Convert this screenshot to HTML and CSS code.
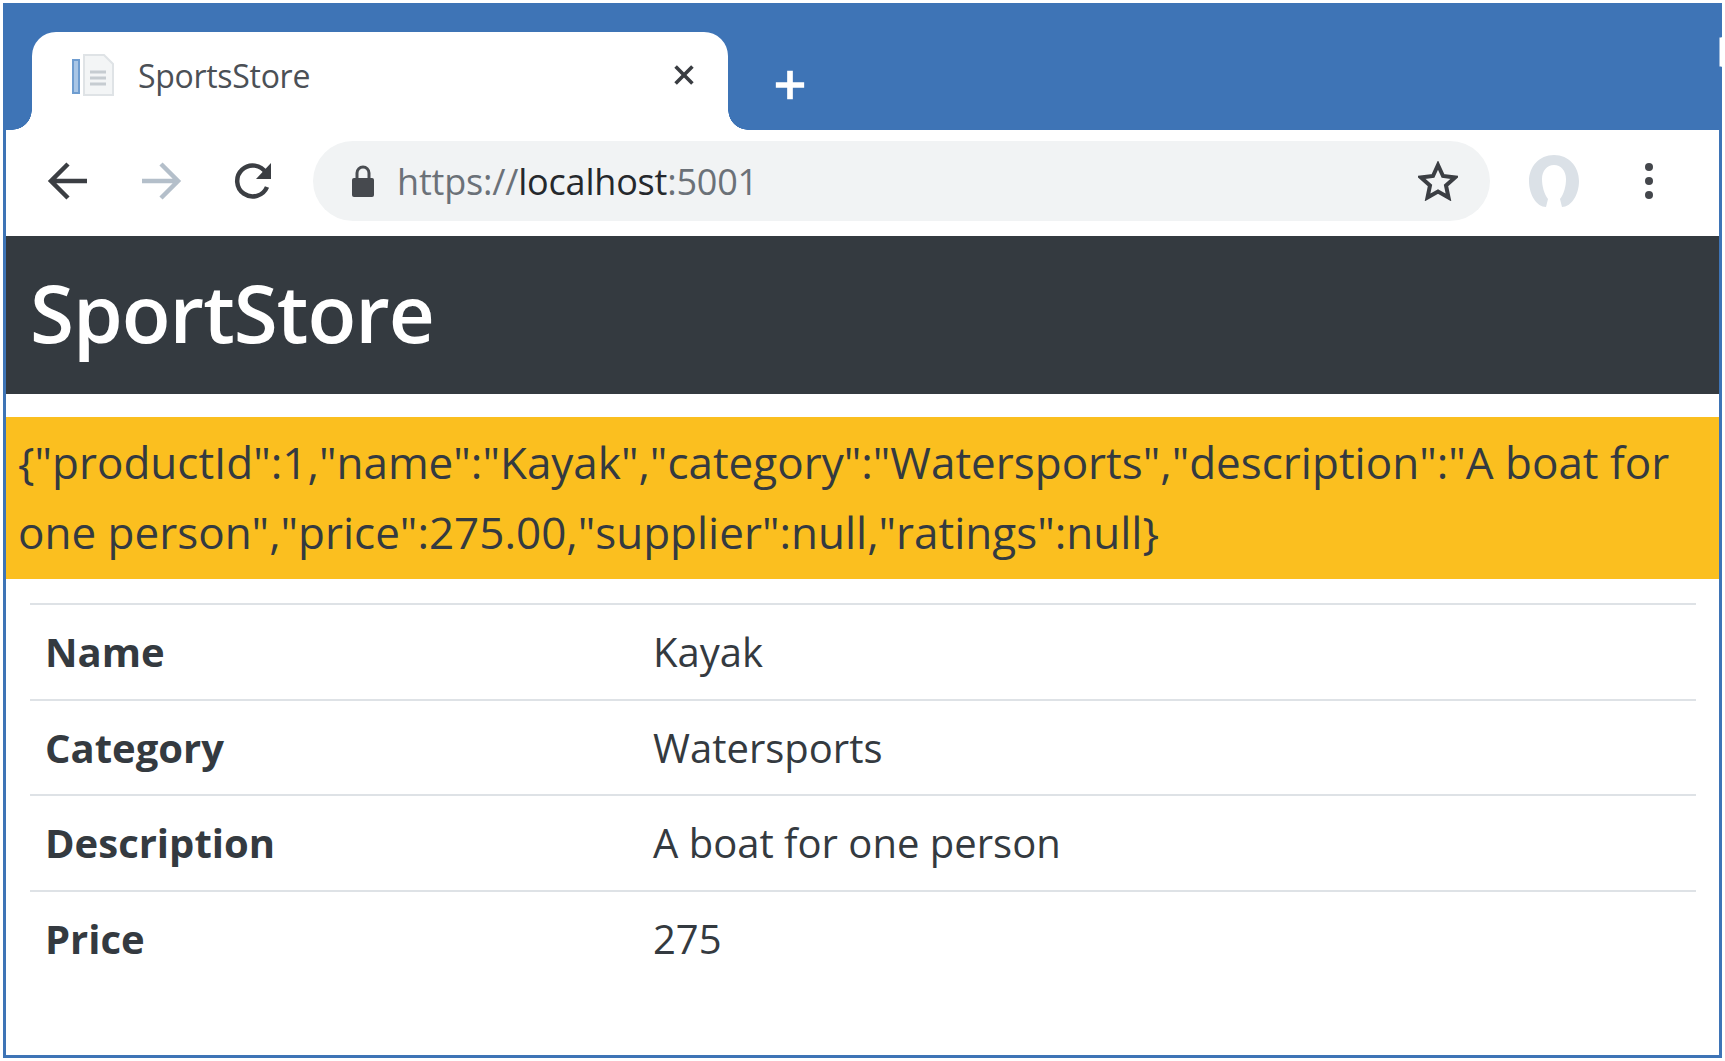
FILE: index.html
```html
<!DOCTYPE html>
<html lang="en">
<head>
<meta charset="utf-8">
<title>SportsStore</title>
<link rel="stylesheet" href="styles.css">
</head>
<body>
<div class="window">
  <div class="titlebar">
    <div class="tab">
      <svg class="favicon" viewBox="0 0 46 46"><path d="M14 3h20l9 9v31H14z" fill="#f3f5f6" stroke="#dfe3e6" stroke-width="2"/><rect x="3" y="8" width="6" height="33" fill="#a9c6e6" stroke="#6f9dd0" stroke-width="2"/><path d="M20 20h16M20 26h16M20 32h16" stroke="#c6ccd1" stroke-width="3"/></svg>
      <span class="tab-title">SportsStore</span>
      <svg class="tab-close" viewBox="0 0 20 20"><path d="M3 3l14 14M17 3L3 17" stroke="#3a3d42" stroke-width="3"/></svg>
    </div>
    <svg class="new-tab" viewBox="0 0 24 24"><path d="M12 2v20M2 12h20" stroke="#fff" stroke-width="4"/></svg>
    <div class="window-controls">
      <svg class="win-btn win-min" viewBox="0 0 30 30"><path d="M1 15h28" stroke="#fff" stroke-width="3"/></svg>
      <svg class="win-btn win-max" viewBox="0 0 30 30"><rect x="2" y="2" width="26" height="26" fill="none" stroke="#fff" stroke-width="3"/></svg>
      <svg class="win-btn win-close" viewBox="0 0 30 30"><path d="M2 1l26 28M28 1L2 29" stroke="#fff" stroke-width="3"/></svg>
    </div>
  </div>
  <div class="toolbar">
    <svg class="nav-icon nav-back" viewBox="0 0 42 42"><path d="M40 21H6M21 4L4 21l17 17" fill="none" stroke="#3b3e43" stroke-width="4.5"/></svg>
    <svg class="nav-icon nav-forward" viewBox="0 0 42 42"><path d="M2 21h34M21 4l17 17-17 17" fill="none" stroke="#b4bfca" stroke-width="4.5"/></svg>
    <svg class="nav-icon nav-reload" viewBox="0 0 42 42"><path d="M34 27a15.500 15.500 0 1 1-1-14" fill="none" stroke="#3b3e43" stroke-width="4.500"/><path d="M38 3v16H23z" fill="#3b3e43"/></svg>
    <div class="omnibox">
      <svg class="lock" viewBox="0 0 24 34"><path d="M6 15V9a6 6 0 0 1 12 0v6" fill="none" stroke="#4a4d52" stroke-width="3"/><rect x="1" y="14" width="22" height="19" rx="2" fill="#46494e"/></svg>
      <span class="url"><span class="url-dim">https://</span>localhost<span class="url-dim">:5001</span></span>
      <svg class="star" viewBox="0 0 40 40"><path d="M20 4l5 11 12 1.500-9 8 2.500 12L20 30.500 9.500 36.500 12 24.500l-9-8L15 15z" fill="none" stroke="#3b3e43" stroke-width="4"/></svg>
    </div>
    <svg class="avatar" viewBox="0 0 56 56"><path d="M28 2C13 2 3 14 3 28s8 26 17 26l2-8c-4-5-6-13-6-20 0-8 5-14 12-14s12 6 12 14c0 7-2 15-6 20l2 8c9 0 17-12 17-26S43 2 28 2z" fill="#dbe1e7"/></svg>
    <svg class="menu" viewBox="0 0 10 38"><circle cx="5" cy="5" r="4" fill="#44474c"/><circle cx="5" cy="19" r="4" fill="#44474c"/><circle cx="5" cy="33" r="4" fill="#44474c"/></svg>
  </div>
  <header class="brand">SportStore</header>
  <div class="json">{"productId":1,"name":"Kayak","category":"Watersports","description":"A boat for one person","price":275.00,"supplier":null,"ratings":null}</div>
  <div class="table-wrap">
    <table class="details">
      <tr><th>Name</th><td>Kayak</td></tr>
      <tr><th>Category</th><td>Watersports</td></tr>
      <tr><th>Description</th><td>A boat for one person</td></tr>
      <tr><th>Price</th><td>275</td></tr>
    </table>
  </div>
</div>
</body>
</html>
```
FILE: styles.css
```css
* { box-sizing: border-box; }
html, body { margin: 0; height: 100%; background: #fff; overflow: hidden; }
body { padding: 3px 3px 3px 3px; font-family: "Open Sans", "Noto Sans", sans-serif; color: #343a40; }
.window { height: 1055px; border: 3px solid #3e74b6; border-top: 0; background: #fff; display: flex; flex-direction: column; }
.titlebar { height: 127px; background: #3e74b6; display: flex; align-items: flex-end; padding-left: 26px; flex: none; position: relative; }
.tab { width: 696px; height: 98px; background: #fff; border-radius: 24px 24px 0 0; display: flex; align-items: center; padding: 0 0 12px 38px; position: relative; }
.tab::before, .tab::after { content: ""; position: absolute; bottom: 0; width: 20px; height: 20px; }
.tab::before { left: -20px; background: radial-gradient(circle at 0 0, #3e74b6 19.500px, #fff 20px); }
.tab::after { right: -20px; background: radial-gradient(circle at 100% 0, #3e74b6 19.500px, #fff 20px); }
.favicon { width: 46px; height: 46px; flex: none; }
.tab-title { font-size: 32px; margin-left: 22px; color: #4b5056; flex: 1; letter-spacing: -0.3px; }
.tab-close { width: 24px; height: 24px; margin-right: 32px; flex: none; }
.new-tab { width: 34px; height: 34px; margin: 0 0 28px 45px; flex: none; }
.window-controls { position: absolute; top: 0; right: 0; display: flex; }
.win-btn { position: absolute; top: 34px; width: 30px; height: 30px; }
.win-min { right: 100px; width: 0; }
.toolbar { height: 106px; display: flex; align-items: center; padding: 0 0 4px 0; flex: none; background: #fff; }
.nav-icon { width: 42px; height: 42px; flex: none; }
.nav-back { margin-left: 41px; }
.nav-forward { margin-left: 51px; }
.nav-reload { margin-left: 51px; }
.omnibox { width: 1177px; height: 80px; margin-left: 38px; background: #f1f3f4; border-radius: 40px; display: flex; align-items: center; padding: 0 32px 0 38px; flex: none; }
.lock { width: 24px; height: 34px; flex: none; }
.url { font-size: 36px; margin-left: 22px; flex: 1; color: #25282c; letter-spacing: -0.2px; }
.url-dim { color: #6b7178; }
.star { width: 40px; height: 40px; flex: none; }
.avatar { width: 56px; height: 56px; margin-left: 36px; flex: none; }
.menu { width: 10px; height: 38px; margin-left: 62px; flex: none; }
.brand { height: 158px; background: #343a40; color: #fff; font-size: 80px; font-weight: 600; padding: 26px 0 0 24px; line-height: 100px; flex: none; letter-spacing: -1px; }
.json { margin-top: 23px; background: #fbbf1f; padding: 10px 12px 12px 12px; font-size: 44px; line-height: 70px; flex: none; }
.table-wrap { padding: 24px 23px 0 24px; }
.details { width: 100%; border-collapse: collapse; font-size: 40px; }
.details th, .details td { border-top: 2px solid #dee2e6; height: 95.500px; padding: 0 15px; text-align: left; }
.details th { width: 608px; font-weight: 700; }
```
